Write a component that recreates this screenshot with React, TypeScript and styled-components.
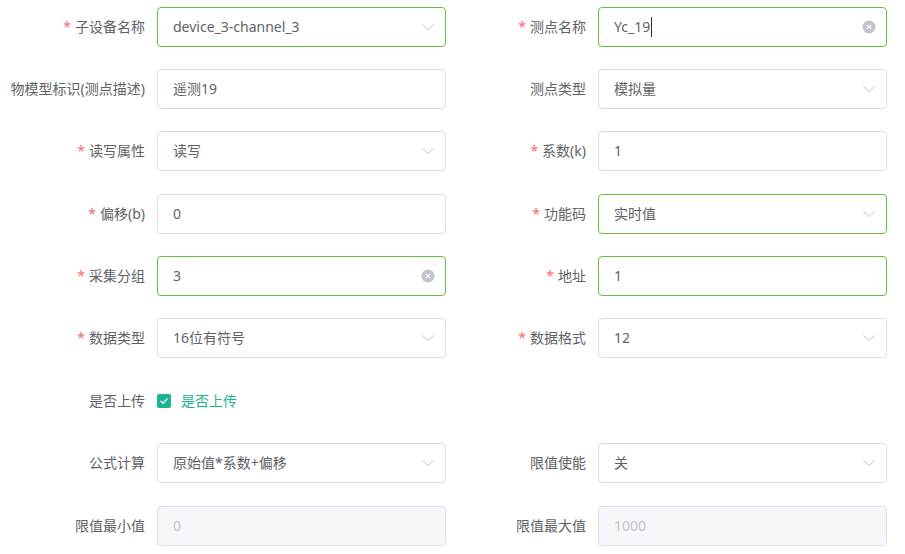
import styled, { createGlobalStyle } from "styled-components";

const GlobalStyle = createGlobalStyle`
  html, body {
    margin: 0;
    padding: 0;
    background: #fff;
  }
  body {
    font-family: "Noto Sans", "Noto Sans CJK SC", sans-serif;
    font-size: 14px;
    color: #606266;
  }
`;

type Field = {
  label: string;
  required?: boolean;
  value: string;
  kind: "select" | "input" | "disabled" | "checkbox" | "empty";
  success?: boolean;
  clearable?: boolean;
  caret?: boolean;
};

const fields: Field[] = [
  { label: "子设备名称", required: true, value: "device_3-channel_3", kind: "select", success: true },
  { label: "测点名称", required: true, value: "Yc_19", kind: "input", success: true, clearable: true, caret: true },
  { label: "物模型标识(测点描述)", value: "遥测19", kind: "input" },
  { label: "测点类型", value: "模拟量", kind: "select" },
  { label: "读写属性", required: true, value: "读写", kind: "select" },
  { label: "系数(k)", required: true, value: "1", kind: "input" },
  { label: "偏移(b)", required: true, value: "0", kind: "input" },
  { label: "功能码", required: true, value: "实时值", kind: "select", success: true },
  { label: "采集分组", required: true, value: "3", kind: "input", success: true, clearable: true },
  { label: "地址", required: true, value: "1", kind: "input", success: true },
  { label: "数据类型", required: true, value: "16位有符号", kind: "select" },
  { label: "数据格式", required: true, value: "12", kind: "select" },
  { label: "是否上传", value: "是否上传", kind: "checkbox" },
  { label: "", value: "", kind: "empty" },
  { label: "公式计算", value: "原始值*系数+偏移", kind: "select" },
  { label: "限值使能", value: "关", kind: "select" },
  { label: "限值最小值", value: "0", kind: "disabled" },
  { label: "限值最大值", value: "1000", kind: "disabled" },
];

export default function App() {
  return (
    <>
      <GlobalStyle />
      <Form>
        {fields.map((f, i) => (
          <Item key={i}>
            <Label>
              {f.required && <Star>*</Star>}
              {f.label}
            </Label>
            <Control>{renderControl(f)}</Control>
          </Item>
        ))}
      </Form>
    </>
  );
}

function renderControl(f: Field) {
  if (f.kind === "empty") return null;
  if (f.kind === "checkbox") {
    return (
      <CheckWrap>
        <CheckBox>
          <svg width="10" height="10" viewBox="0 0 10 10" fill="none">
            <path d="M2 5.2 L4.2 7.2 L8 3" stroke="#fff" strokeWidth="1.4" strokeLinecap="round" strokeLinejoin="round" />
          </svg>
        </CheckBox>
        <CheckText>{f.value}</CheckText>
      </CheckWrap>
    );
  }
  return (
    <Box $success={f.success} $disabled={f.kind === "disabled"}>
      <Value $disabled={f.kind === "disabled"}>
        {f.value}
        {f.caret && <Caret />}
      </Value>
      {f.kind === "select" && (
        <svg width="14" height="14" viewBox="0 0 14 14" fill="none">
          <path d="M1.5 4.5 L7 9.5 L12.5 4.5" stroke="#c0c4cc" strokeWidth="1" />
        </svg>
      )}
      {f.clearable && (
        <svg width="14" height="14" viewBox="0 0 14 14">
          <circle cx="7" cy="7" r="6.5" fill="#c0c4cc" />
          <path d="M4.8 4.8 L9.2 9.2 M9.2 4.8 L4.8 9.2" stroke="#fff" strokeWidth="1.2" />
        </svg>
      )}
    </Box>
  );
}

const Form = styled.div`
  display: grid;
  grid-template-columns: 441px 441px;
  row-gap: 22.375px;
  padding: 6.5px 0 0 5px;
`;

const Item = styled.div`
  display: flex;
  align-items: center;
  height: 40px;
`;

const Label = styled.div`
  flex: 0 0 152px;
  box-sizing: border-box;
  padding-right: 12px;
  text-align: right;
  font-size: 14px;
  line-height: 20px;
  color: #606266;
  white-space: nowrap;
`;

const Star = styled.span`
  color: #f56c6c;
  margin-right: 4px;
`;

const Control = styled.div`
  flex: 1;
  display: flex;
  align-items: center;
`;

const Box = styled.div<{ $success?: boolean; $disabled?: boolean }>`
  flex: 1;
  box-sizing: border-box;
  height: 40px;
  display: flex;
  align-items: center;
  padding: 0 8px 0 15px;
  border: 1px solid ${(p) => (p.$success ? "#67c23a" : "#dcdfe6")};
  border-radius: 4px;
  background: ${(p) => (p.$disabled ? "#f5f7fa" : "#fff")};

  svg {
    flex: 0 0 auto;
    margin-right: 2px;
  }
`;

const Value = styled.div<{ $disabled?: boolean }>`
  flex: 1;
  display: flex;
  align-items: center;
  font-size: 14px;
  line-height: 20px;
  color: ${(p) => (p.$disabled ? "#c0c4cc" : "#606266")};
`;

const Caret = styled.span`
  display: inline-block;
  width: 1px;
  height: 20px;
  margin-left: 1px;
  background: #303133;
`;

const CheckWrap = styled.label`
  display: flex;
  align-items: center;
  gap: 10px;
  cursor: pointer;
`;

const CheckBox = styled.span`
  width: 14px;
  height: 14px;
  box-sizing: border-box;
  border-radius: 2px;
  background: #1ab394;
  display: flex;
  align-items: center;
  justify-content: center;
`;

const CheckText = styled.span`
  font-size: 14px;
  line-height: 20px;
  color: #1ab394;
`;
